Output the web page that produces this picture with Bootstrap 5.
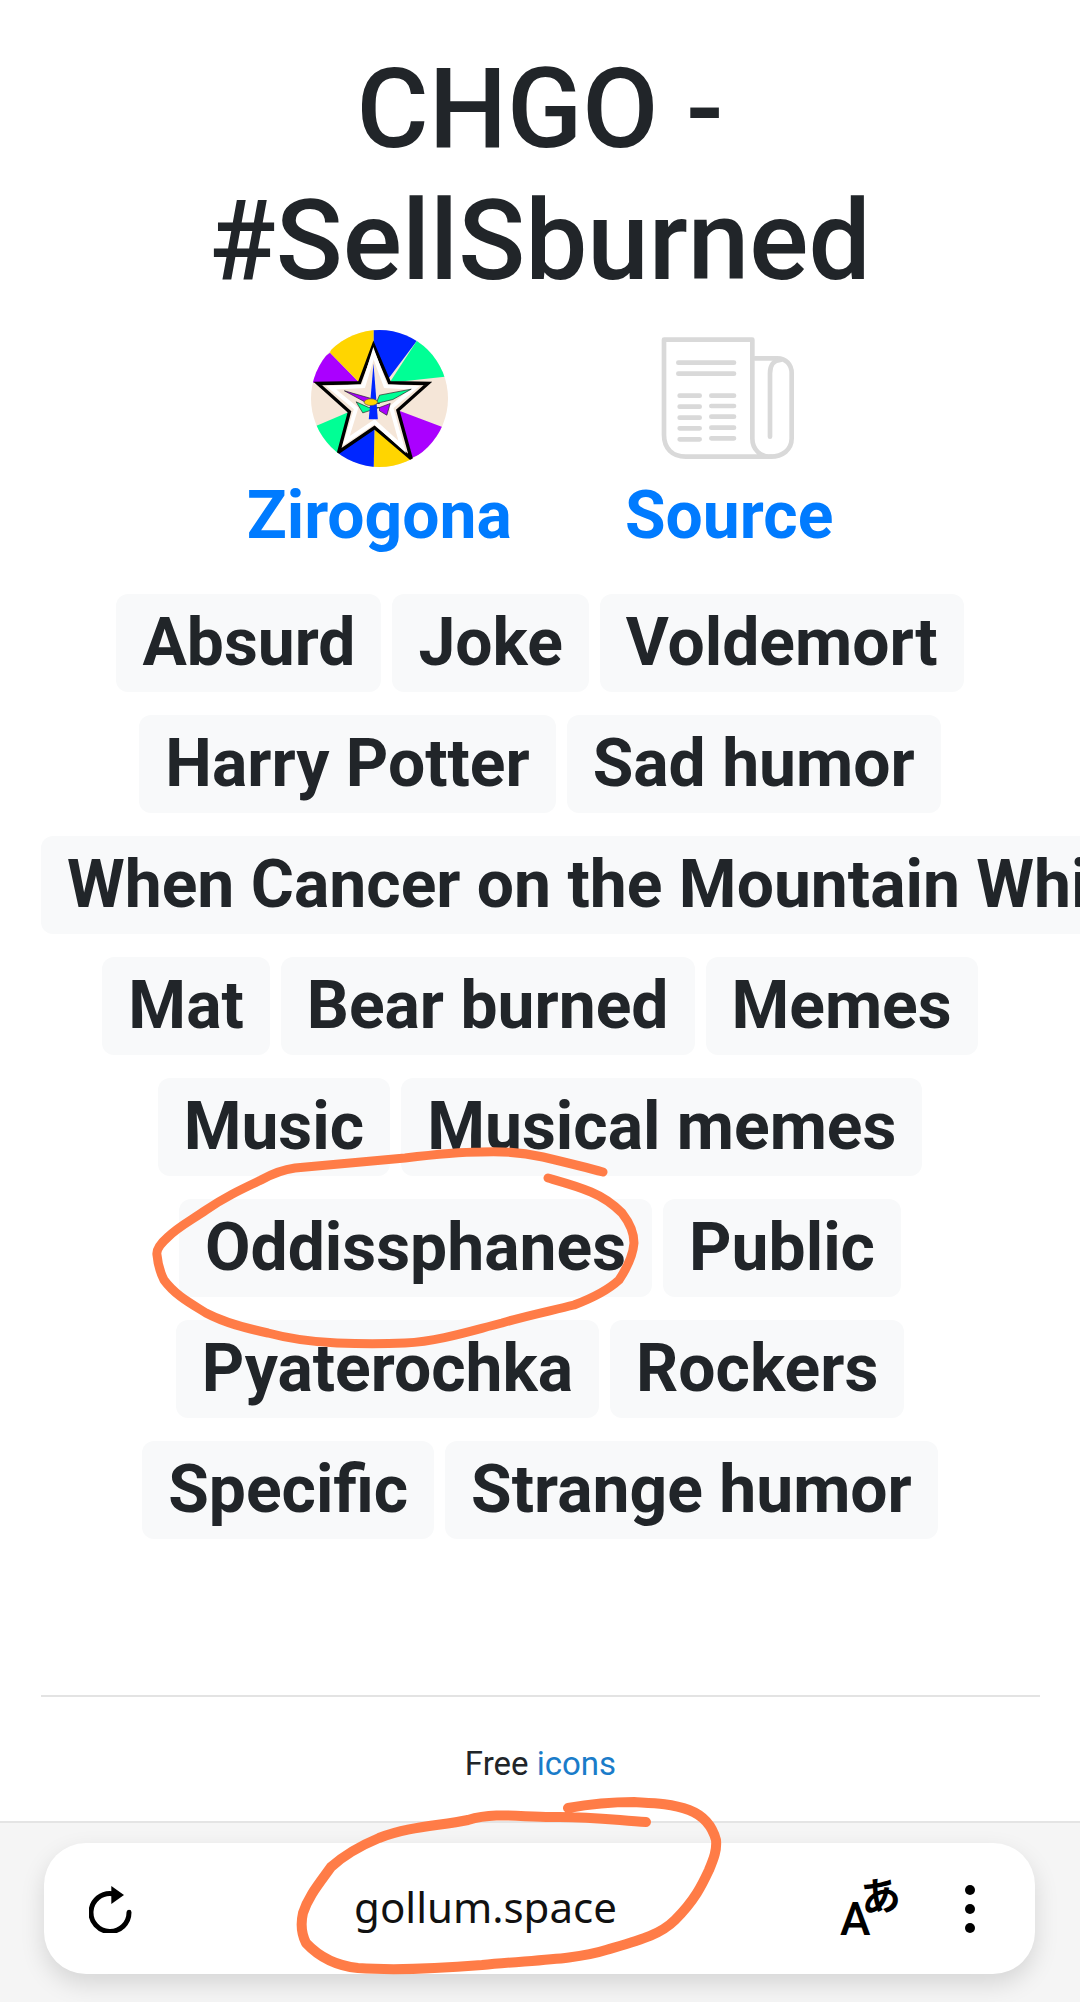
<!DOCTYPE html>
<html lang="en">
<head>
    <meta charset="UTF-8">
    <meta name="viewport" content="width=device-width, initial-scale=1.0">
    <title>CHGO - #SellSburned</title>
    <link rel="stylesheet" href="https://cdn.jsdelivr.net/npm/bootstrap@5.3.0/dist/css/bootstrap.min.css">
    <style>
        html, body { height: 100%; }
        body {
            font-family: Roboto, "Liberation Sans", sans-serif;
            color: #212529;
            overflow: hidden;
        }
        .page-shell { height: 2002px; width: 1080px; overflow: hidden; }
        .page-body { padding: 43px 41px 0; }
        .song-title { font-size: 110.5px; font-weight: 500; line-height: 132px; margin: 0 0 23px; }
        .credit-row { gap: 113px; margin-bottom: 40px; }
        .credit-item { display: flex; flex-direction: column; align-items: center; }
        .credit-pic { height: 137px; display: flex; align-items: center; justify-content: center; }
        .credit-link { font-size: 66px; font-weight: 700; line-height: 76px; color: #007bff; text-decoration: none; margin-top: 11px; }
        .tag-wrap { display: flex; flex-wrap: wrap; justify-content: safe center; gap: 23px 11px; }
        .tag-chip {
            background: #f8f9fa;
            color: #212529;
            font-size: 66px;
            font-weight: 700;
            line-height: 98px;
            padding: 0 26px;
            border-radius: 12px;
            white-space: nowrap;
            flex: none;
            text-decoration: none;
        }
        .page-foot { padding: 0 40px 0 41px; }
        .page-rule { border: 0; border-top: 2px solid #e3e3e3; opacity: 1; margin: 0; }
        .free-line { font-size: 33px; line-height: 40px; text-align: center; margin: 47px 0 0; }
        .free-line a { color: #1a7cc9; text-decoration: none; }
        .browser-bar {
            background: #f5f5f5;
            border-top: 2px solid #e4e4e4;
            margin-top: 37px;
            padding: 20px 45px 28px 44px;
        }
        .url-pill {
            background: #fff;
            border-radius: 42px;
            height: 131px;
            padding: 0 59px 0 45px;
            box-shadow: 0 10px 24px rgba(0, 0, 0, .13);
        }
        .url-text { font-family: "Noto Sans", "DejaVu Sans", sans-serif; font-size: 42px; color: #111; margin: 0 2px 4px 0; }
        .bar-actions { gap: 66px; }
        .translate-mark { position: relative; width: 58px; height: 56px; color: #000; }
        .translate-mark .latin { position: absolute; left: 0; bottom: -5px; font-size: 46px; font-weight: 500; font-family: Roboto, sans-serif; line-height: 1; }
        .translate-mark .kana { position: absolute; right: -2px; top: -7px; font-size: 40px; font-weight: 700; line-height: 1; font-family: "Noto Sans CJK JP", sans-serif; transform: rotate(-8deg); }
        .scribble-layer { position: absolute; left: 0; top: 0; width: 1080px; height: 2002px; pointer-events: none; }
    </style>
</head>
<body class="position-relative">

    <div class="page-shell d-flex flex-column">
        <div class="page-body flex-grow-1">
            <h1 class="song-title text-center">CHGO -<br>#SellSburned</h1>

            <div class="credit-row d-flex justify-content-center">
                <div class="credit-item">
                    <div class="credit-pic">
                        <svg width="137" height="137" viewBox="35 30 410 410">
                            <defs><clipPath id="disc"><circle cx="240" cy="235" r="205"/></clipPath></defs>
                            <g clip-path="url(#disc)">
                                <rect width="480" height="480" fill="#f5e6d8"/>
                                <polygon points="222,0 222,235 352,62 400,0" fill="#0026ff"/>
                                <polygon points="352,62 270,188 435,170 480,100 420,40" fill="#00ff95"/>
                                <polygon points="295,270 428,320 480,350 338,412 320,350" fill="#aa00ff"/>
                                <polygon points="225,322 338,412 300,480 222,480" fill="#ffd500"/>
                                <polygon points="225,322 118,395 130,480 222,480" fill="#0026ff"/>
                                <polygon points="150,275 55,315 20,330 90,420 118,395" fill="#00ff95"/>
                                <polygon points="180,188 42,188 20,150 92,98" fill="#aa00ff"/>
                                <polygon points="180,188 92,98 120,0 222,0 222,75" fill="#ffd500"/>
                                <polygon points="222,75 270,188 385,190 295,270 335,415 225,322 118,395 150,275 55,190 180,188" fill="#f5e6d8" stroke="#000" stroke-width="10" stroke-linejoin="miter"/>
                                <polygon points="222,100 258,198 345,203 275,262 308,380 225,305 140,362 170,265 95,203 192,198" fill="#f5e6d8" stroke="#fff" stroke-width="12"/>
                                <polygon points="135,212 215,235 240,250 205,250" fill="#aa00ff" stroke="#222" stroke-width="2"/>
                                <polygon points="335,207 240,225 230,250 280,238" fill="#00ff95" stroke="#222" stroke-width="2"/>
                                <polygon points="170,245 208,262 240,262 190,278" fill="#00ff95" stroke="#222" stroke-width="2"/>
                                <polygon points="240,262 272,250 262,285 240,272" fill="#aa00ff" stroke="#222" stroke-width="2"/>
                                <polygon points="222,130 235,297 208,297" fill="#0026ff"/>
                                <ellipse cx="214" cy="246" rx="20" ry="10" fill="#ffd500" stroke="#555" stroke-width="2"/>
                            </g>
                        </svg>
                    </div>
                    <a class="credit-link" href="#">Zirogona</a>
                </div>
                <div class="credit-item">
                    <div class="credit-pic">
                        <svg width="160" height="137" viewBox="0 -15 480 411" fill="none" stroke="#d9d9d9" stroke-linecap="round" stroke-linejoin="round" stroke-width="14">
                            <path d="M45 14H310V310C310 345 335 365 365 365H110C70 365 45 340 45 300Z"/>
                            <path d="M318 70H385C410 70 428 88 428 115V310C428 345 400 365 365 365"/>
                            <path d="M363 305V115C363 90 375 75 395 75"/>
                            <path d="M88 83H255M88 116H255"/>
                            <path d="M92 182H152M92 215H152M92 248H152M92 280H152M92 313H152"/>
                            <path d="M187 182H255M187 213H255M187 245H255M187 278H255M187 310H255"/>
                        </svg>
                    </div>
                    <a class="credit-link" href="#">Source</a>
                </div>
            </div>

            <div class="tag-wrap">
                <a class="tag-chip" href="#">Absurd</a>
                <a class="tag-chip" href="#">Joke</a>
                <a class="tag-chip" href="#">Voldemort</a>
                <a class="tag-chip" href="#">Harry Potter</a>
                <a class="tag-chip" href="#">Sad humor</a>
                <a class="tag-chip" href="#">When Cancer on the Mountain Whistles</a>
                <a class="tag-chip" href="#">Mat</a>
                <a class="tag-chip" href="#">Bear burned</a>
                <a class="tag-chip" href="#">Memes</a>
                <a class="tag-chip" href="#">Music</a>
                <a class="tag-chip" href="#">Musical memes</a>
                <a class="tag-chip" href="#">Oddissphanes</a>
                <a class="tag-chip" href="#">Public</a>
                <a class="tag-chip" href="#">Pyaterochka</a>
                <a class="tag-chip" href="#">Rockers</a>
                <a class="tag-chip" href="#">Specific</a>
                <a class="tag-chip" href="#">Strange humor</a>
            </div>
        </div>

        <div class="page-foot">
            <hr class="page-rule">
            <p class="free-line">Free <a href="#">icons</a></p>
        </div>

        <div class="browser-bar">
            <div class="url-pill d-flex align-items-center justify-content-between">
                <svg width="44" height="48" viewBox="55 40 132 144" fill="none" stroke="#000" stroke-width="15">
                    <path d="M175 122A57 57 0 1 1 125 66" stroke-linecap="round"/>
                    <path d="M122 43L160 70L122 97Z" fill="#000" stroke="none"/>
                </svg>
                <span class="url-text">gollum.space</span>
                <div class="bar-actions d-flex align-items-center">
                    <div class="translate-mark"><span class="latin">A</span><span class="kana">あ</span></div>
                    <svg width="12" height="50" viewBox="0 0 12 50" fill="#000"><circle cx="6" cy="6" r="5"/><circle cx="6" cy="25" r="5"/><circle cx="6" cy="44" r="5"/></svg>
                </div>
            </div>
        </div>
    </div>

    <svg class="scribble-layer" viewBox="0 0 1080 2002" fill="none" stroke="#ff7c47" stroke-linecap="round" stroke-linejoin="round">
        <path stroke-width="9" d="M603 1172C585 1167 543 1157 543 1157C520 1152 500 1151 481 1152C455 1152 430 1155 405 1158L295 1168C280 1170 270 1175 261 1180C240 1190 225 1197 206 1210C190 1221 178 1227 168 1237C160 1244 156 1250 157 1255C158 1266 160 1272 164 1280C175 1295 190 1303 206 1313C225 1323 245 1328 268 1333C290 1339 315 1342 337 1343C360 1344 385 1344 405 1343C440 1341 470 1331 502 1323C525 1316 550 1311 574 1305C590 1299 607 1291 619 1280C627 1268 633 1255 634 1243C634 1232 629 1222 622 1213C612 1203 603 1197 591 1192C577 1186 562 1182 548 1178"/>
        <path stroke-width="10" d="M646 1822C615 1820 585 1816 551 1817C520 1817 495 1812 468 1820C440 1826 410 1826 379 1838C355 1848 342 1857 331 1867C318 1885 308 1897 303 1913C300 1926 302 1935 306 1943C320 1958 338 1966 358 1968C400 1971 445 1968 482 1965C530 1960 575 1960 606 1950C640 1940 660 1935 675 1920C695 1900 702 1885 709 1870C714 1858 717 1850 716 1840C712 1825 702 1815 689 1810C670 1803 650 1803 634 1802C612 1802 590 1804 568 1808"/>
    </svg>

    <script src="https://cdn.jsdelivr.net/npm/bootstrap@5.3.0/dist/js/bootstrap.bundle.min.js"></script>
</body>
</html>
